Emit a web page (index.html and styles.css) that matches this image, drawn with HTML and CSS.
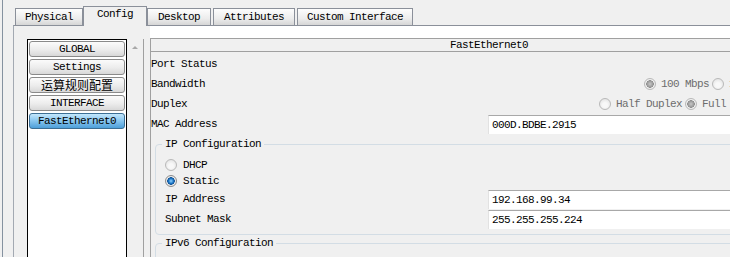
FILE: index.html
```html
<!DOCTYPE html>
<html lang="en">
<head>
    <meta charset="UTF-8">
    <title>Config</title>
    <link rel="stylesheet" href="styles.css">
</head>
<body>
    <div class="window">
        <div class="tabs">
            <div class="tab">Physical</div>
            <div class="tab active">Config</div>
            <div class="tab wide">Desktop</div>
            <div class="tab wide">Attributes</div>
            <div class="tab">Custom Interface</div>
        </div>

        <div class="panel">
            <div class="side">
                <div class="list">
                    <div class="item">GLOBAL</div>
                    <div class="item">Settings</div>
                    <div class="item cjk">运算规则配置</div>
                    <div class="item">INTERFACE</div>
                    <div class="item selected">FastEthernet0</div>
                </div>
                <div class="scrollbar"><span class="arrow"></span></div>
            </div>

            <div class="main">
                <div class="strip"></div>
                <div class="content">
                    <div class="title">FastEthernet0</div>
                    <div class="rows">
                        <div class="field"><span>Port Status</span></div>
                        <div class="field">
                            <span>Bandwidth</span>
                            <div class="opts bw">
                                <span class="radio on off"></span><span class="dim">100 Mbps</span>
                                <span class="radio"></span><span class="dim">10 Mbps</span>
                            </div>
                        </div>
                        <div class="field">
                            <span>Duplex</span>
                            <div class="opts dx">
                                <span class="radio"></span><span class="dim">Half Duplex</span>
                                <span class="radio on off"></span><span class="dim">Full Duplex</span>
                            </div>
                        </div>
                        <div class="field">
                            <span>MAC Address</span>
                            <div class="input">000D.BDBE.2915</div>
                        </div>

                        <div class="group">
                            <div class="legend">IP Configuration</div>
                            <div class="choice"><span class="radio"></span>DHCP</div>
                            <div class="choice"><span class="radio on"></span>Static</div>
                            <div class="field">
                                <span>IP Address</span>
                                <div class="input">192.168.99.34</div>
                            </div>
                            <div class="field">
                                <span>Subnet Mask</span>
                                <div class="input">255.255.255.224</div>
                            </div>
                        </div>

                        <div class="group">
                            <div class="legend">IPv6 Configuration</div>
                        </div>
                    </div>
                </div>
            </div>
        </div>
    </div>
</body>
</html>
```

FILE: styles.css
```css
body {
    margin: 0;
    height: 257px;
    overflow: hidden;
    background-color: #f0f0f0;
    color: #000;
    font-family: "Liberation Mono", monospace;
    font-size: 11px;
    line-height: 12px;
    letter-spacing: -0.6px;
}

.window {
    margin-left: 2px;
    height: 257px;
    overflow: hidden;
    border-left: 1px solid #8592a0;
}

/* tab strip */
.tabs {
    display: flex;
    align-items: flex-end;
    height: 25px;
    padding-left: 12px;
}

.tab {
    height: 16px;
    line-height: 17px;
    padding: 0 9px;
    border: 1px solid #8b909a;
    border-bottom: none;
    background: linear-gradient(#fdfdfd, #ececec 60%, #d6d6d6);
}

.tab.wide {
    padding: 0 10px;
    margin-right: 2px;
}

.tab.active {
    position: relative;
    z-index: 1;
    height: 19px;
    line-height: 15px;
    margin-bottom: -1px;
    padding: 0 13px;
    background: #f0f0f0;
}

.panel {
    display: flex;
    height: 231px;
    overflow: hidden;
    margin-left: 10px;
    padding-left: 13px;
    border-top: 1px solid #8b909a;
    border-left: 1px solid #a3a9b2;
}

/* left list */
.side {
    display: flex;
    padding-top: 13px;
    margin-right: 6px;
}

.list {
    width: 96px;
    padding: 1px;
    border: 1px solid #000;
    border-bottom: none;
    background: #fff;
}

.item {
    height: 14px;
    line-height: 15px;
    margin-bottom: 2px;
    text-align: center;
    border: 1px solid #8a8a8a;
    border-radius: 3px;
    background: linear-gradient(#fbfbfb, #ececec 55%, #d8d8d8);
}

.item.cjk {
    font-family: "Noto Sans CJK SC", sans-serif;
    font-size: 12px;
    line-height: 14px;
    letter-spacing: 0;
}

.item.selected {
    border-color: #3c6f95;
    background: linear-gradient(#c4e7fc, #8cc8f0 45%, #4d9fd9);
}

.scrollbar {
    width: 16px;
    border-right: 1px solid #a0a0a0;
    display: flex;
    justify-content: center;
}

.arrow {
    width: 0;
    height: 0;
    margin-top: 7px;
    border-left: 3px solid transparent;
    border-right: 3px solid transparent;
    border-bottom: 3px solid #a8a8a8;
}

/* main area */
.main {
    display: flex;
    flex-direction: column;
}

.strip {
    flex: none;
    height: 12px;
    background: #fff;
}

.content {
    width: 690px;
    flex: 1;
    border-top: 1px solid #a0a0a0;
    border-left: 1px solid #a0a0a0;
}

.title {
    height: 12px;
    line-height: 13px;
    text-align: center;
    padding-right: 14px;
    border-bottom: 1px solid #a0a0a0;
}

.rows {
    padding-top: 2px;
}

.field {
    display: grid;
    grid-template-columns: 337px 1fr;
    align-items: center;
    height: 20px;
}

.opts {
    display: flex;
    align-items: center;
}

.opts.bw {
    padding-left: 156px;
}

.opts.dx {
    padding-left: 111px;
}

.dim {
    color: #6d6d6d;
    margin: 0 3px 0 5px;
}

.radio {
    display: inline-block;
    box-sizing: border-box;
    width: 12px;
    height: 12px;
    flex: none;
    border: 1px solid #b9b9b9;
    border-radius: 50%;
    background: radial-gradient(circle at 50% 60%, #f8f8f8 30%, #dcdcdc 100%);
}

.radio.on {
    border-color: #8d8d8d;
    background: radial-gradient(circle, #8fd3ff 0, #1a74c4 2.5px, #0d4f93 3.5px, #f0f0f0 4px, #d6d6d6 100%);
}

.radio.on.off {
    border-color: #b9b9b9;
    background: radial-gradient(circle, #c8c8c8 0, #9a9a9a 3px, #8a8a8a 3.5px, #f4f4f4 4px, #dcdcdc 100%);
}

.input {
    box-sizing: border-box;
    width: 340px;
    height: 19px;
    line-height: 18px;
    padding-left: 3px;
    background: #fff;
    border-top: 1px solid #a8a8a8;
    border-left: 1px solid #e2e2e2;
}

/* fieldsets */
.group {
    margin: 10px 0 0 4px;
    padding-bottom: 5px;
    border: 1px solid #d3dde5;
    border-radius: 4px;
}

.group + .group {
    margin-top: 8px;
    height: 30px;
}

.legend {
    display: table;
    margin: -7px 0 7px 6px;
    padding: 0 3px;
    background: #f0f0f0;
}

.choice {
    display: flex;
    align-items: center;
    height: 16px;
    padding-left: 9px;
}

.choice .radio {
    margin-right: 6px;
}

.group .field {
    grid-template-columns: 323px 1fr;
    padding-left: 9px;
}
```
